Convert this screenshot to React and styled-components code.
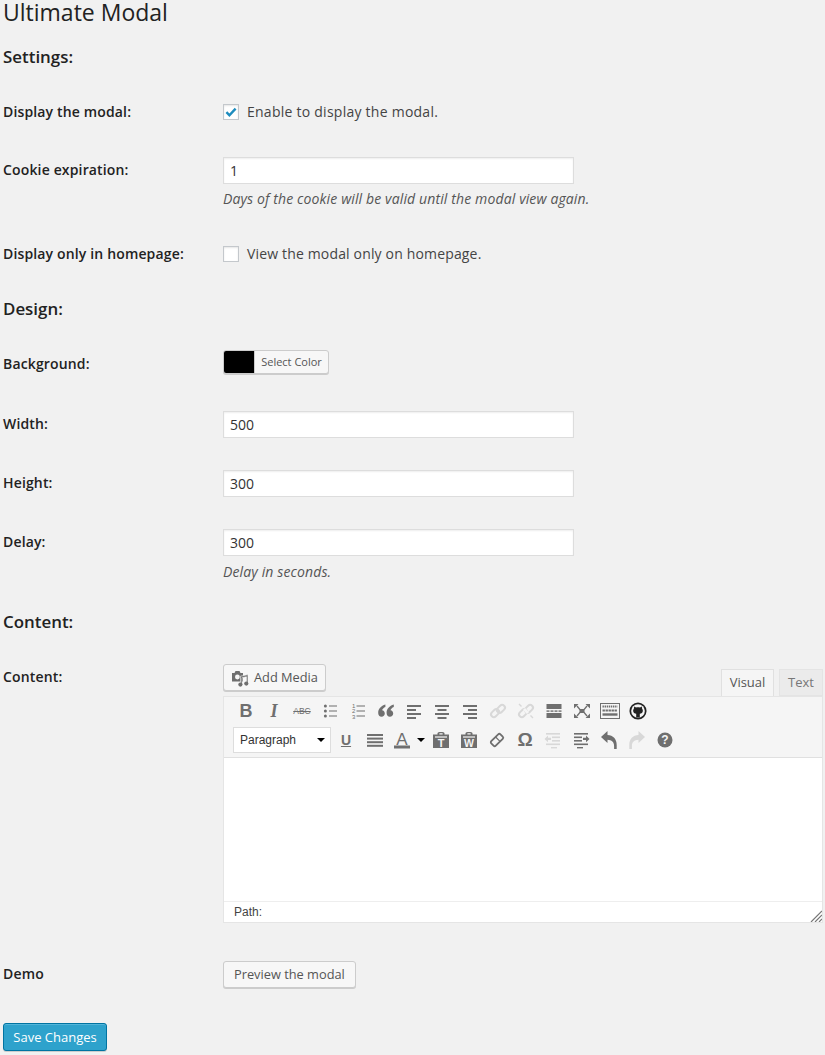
import React from "react";
import styled, { createGlobalStyle } from "styled-components";

const GlobalStyle = createGlobalStyle`
  html, body {
    margin: 0;
    padding: 0;
    background: #f1f1f1;
    color: #444;
    font-family: "Open Sans", sans-serif;
    font-size: 14px;
  }
`;

const Page = styled.form`
  padding-left: 3px;
  height: 1055px;
  box-sizing: border-box;
`;

const Title = styled.h1`
  margin: 0;
  font-size: 23px;
  font-weight: 400;
  line-height: 24px;
  color: #222;
`;

const SectionTitle = styled.h3`
  margin: ${(p) => p.$top}px 0 0;
  font-size: 16.9px;
  font-weight: 600;
  line-height: 22px;
  color: #222;
`;

const Row = styled.div`
  display: grid;
  grid-template-columns: 220px 600px;
  margin-top: ${(p) => p.$top}px;
`;

const Label = styled.label`
  font-weight: 600;
  line-height: 24px;
  letter-spacing: 0.15px;
  color: #222;
  padding-top: ${(p) => p.$offset || 0}px;
`;

const CheckRow = styled.label`
  display: flex;
  align-items: center;
  gap: 8px;
  line-height: 24px;
  letter-spacing: ${(p) => p.$spacing}px;
`;

const Box = styled.span`
  width: 16px;
  height: 16px;
  box-sizing: border-box;
  background: #fff;
  border: 1px solid #c4c8cc;
  box-shadow: inset 0 1px 2px rgba(0, 0, 0, 0.1);
  display: flex;
  align-items: center;
  justify-content: center;
`;

const TextInput = styled.input`
  display: block;
  width: 351px;
  height: 27px;
  box-sizing: border-box;
  margin: 0;
  padding: 3px 5px 3px 6px;
  border: 1px solid #ddd;
  background: #fff;
  color: #333;
  font: 14px "Open Sans", sans-serif;
  box-shadow: inset 0 1px 2px rgba(0, 0, 0, 0.07);
`;

const Hint = styled.p`
  margin: ${(p) => p.$top}px 0 0;
  font-style: italic;
  line-height: 20px;
  letter-spacing: 0.13px;
  color: #555;
`;

const ColorButton = styled.div`
  display: flex;
  width: 106px;
  height: 24px;
  box-sizing: border-box;
  border: 1px solid #ccc;
  border-radius: 3px;
  overflow: hidden;
  background: #f7f7f7;
  box-shadow: 0 1px 0 #ccc;
`;

const Swatch = styled.span`
  width: 30px;
  background: #000;
  border-right: 1px solid #ccc;
`;

const ColorText = styled.span`
  flex: 1;
  font-size: 11px;
  line-height: 22px;
  text-align: center;
  color: #555;
`;

const Button = styled.button`
  display: inline-flex;
  align-items: center;
  gap: 5px;
  height: 27px;
  box-sizing: border-box;
  margin: 0;
  padding: 0 10px;
  border: 1px solid #ccc;
  border-radius: 3px;
  background: #f7f7f7;
  box-shadow: 0 1px 0 #ccc;
  color: #555;
  font: 12.8px/25px "Open Sans", sans-serif;
`;

const MediaButton = styled(Button)`
  padding: 0 7px 0 7px;
`;

const SaveButton = styled(Button)`
  display: block;
  margin-top: 35px;
  height: 28px;
  width: 104px;
  padding: 0;
  text-align: center;
  font-size: 13px;
  background: #2ea2cc;
  border-color: #0074a2;
  box-shadow: inset 0 1px 0 rgba(120, 200, 230, 0.5), 0 1px 0 rgba(0, 0, 0, 0.15);
  color: #fff;
`;

const EditorTop = styled.div`
  display: flex;
  justify-content: space-between;
  align-items: flex-start;
  height: 32px;
`;

const Tabs = styled.div`
  display: flex;
  gap: 5px;
  margin-top: 5px;
  position: relative;
`;

const Tab = styled.span`
  box-sizing: border-box;
  width: ${(p) => p.$w}px;
  height: ${(p) => (p.$active ? 28 : 27)}px;
  border: 1px solid ${(p) => (p.$active ? "#e0e0e0" : "#e4e4e4")};
  border-bottom-color: ${(p) => (p.$active ? "#f5f5f5" : "#e4e4e4")};
  background: ${(p) => (p.$active ? "#f5f5f5" : "#ebebeb")};
  color: ${(p) => (p.$active ? "#555" : "#777")};
  font-size: 13px;
  line-height: 24px;
  text-align: center;
`;

const Editor = styled.div`
  width: 600px;
  box-sizing: border-box;
  border: 1px solid #e5e5e5;
  background: #f5f5f5;
  position: relative;
`;

const ToolRow = styled.div`
  display: flex;
  align-items: center;
  height: 28px;
  padding-left: ${(p) => p.$left}px;
  & + & {
    margin-top: 1px;
  }
`;

const Tool = styled.span`
  width: ${(p) => p.$w || 28}px;
  height: 28px;
  flex: none;
  display: flex;
  align-items: center;
  justify-content: center;
  color: ${(p) => (p.$off ? "#d8d8d8" : "#6f6f6f")};
`;

const Glyph = styled(Tool)`
  font-family: ${(p) => (p.$serif ? '"Liberation Serif", serif' : '"Liberation Sans", sans-serif')};
  font-weight: ${(p) => (p.$light ? 400 : 700)};
  font-style: ${(p) => (p.$italic ? "italic" : "normal")};
  font-size: ${(p) => p.$size || 17}px;
  text-decoration: ${(p) => p.$line || "none"};
`;

const FormatSelect = styled.div`
  width: 98px;
  height: 26px;
  box-sizing: border-box;
  flex: none;
  display: flex;
  align-items: center;
  justify-content: space-between;
  padding: 0 5px 0 6px;
  margin-right: 1px;
  background: #fff;
  border: 1px solid #ddd;
  color: #333;
  font: 12px "Liberation Sans", sans-serif;
`;

const Caret = styled.i`
  width: 0;
  height: 0;
  border-left: 4px solid transparent;
  border-right: 4px solid transparent;
  border-top: 4px solid #000;
`;

const EditArea = styled.div`
  height: 144px;
  margin-top: 3px;
  background: #fff;
  border-top: 1px solid #e0e0e0;
  box-sizing: border-box;
`;

const StatusBar = styled.div`
  height: 21px;
  box-sizing: border-box;
  padding-left: 10px;
  background: #fff;
  border-top: 1px solid #eee;
  color: #444;
  font: 12px/20px "Liberation Sans", sans-serif;
`;

const Grip = styled.svg`
  position: absolute;
  right: 0;
  bottom: 0;
`;

const Svg = ({ children, size = 20 }) => (
  <svg width={size} height={size} viewBox="0 0 20 20" fill="currentColor">
    {children}
  </svg>
);

const Lines = ({ rows }) => (
  <Svg>
    {rows.map(([x, y, w, h = 2], i) => (
      <rect key={i} x={x} y={y} width={w} height={h} />
    ))}
  </Svg>
);

const chain = (
  <>
    <rect x="2.6" y="9.4" width="9" height="5.6" rx="2.8" transform="rotate(-45 7 12.2)" fill="none" stroke="currentColor" strokeWidth="2" />
    <rect x="8.4" y="5" width="9" height="5.6" rx="2.8" transform="rotate(-45 13 7.8)" fill="none" stroke="currentColor" strokeWidth="2" />
  </>
);

const Clipboard = ({ letter }) => (
  <Svg>
    <path d="M2 4.5h4.5V3.2C6.5 2.4 8 2 10 2s3.5.4 3.5 1.2v1.3H18V18H2zM8.4 4.4h3.2V3.3H8.4z" />
    <rect x="4" y="6.4" width="12" height="1.2" fill="#f5f5f5" />
    <text x="10" y="16.6" textAnchor="middle" fontSize={letter === "W" ? 10.5 : 11} fontWeight="700" fontFamily="Liberation Sans" fill="#f5f5f5">
      {letter}
    </text>
  </Svg>
);

const Arrow = ({ flip, off }) => (
  <Tool $off={off}>
    <svg width="20" height="20" viewBox="0 0 20 20" fill="currentColor" style={{ transform: flip ? "scaleX(-1)" : "none" }}>
      <path d="M2 7 8.5 1v4c5.6.2 9.2 4 9.2 10v4h-2.6v-3c0-3.8-2.4-6-6.6-6.2V13z" />
    </svg>
  </Tool>
);

const firstRowTools = (
  <>
    <Glyph $size={18}>B</Glyph>
    <Glyph $size={18} $italic $serif>I</Glyph>
    <Glyph $size={8.5} $light $line="line-through">ABC</Glyph>
    <Tool>
      <Svg>
        <circle cx="5.4" cy="5" r="1.5" />
        <circle cx="5.4" cy="10" r="1.5" />
        <circle cx="5.4" cy="15" r="1.5" />
        <rect x="9" y="4.5" width="8" height="1" />
        <rect x="9" y="9.5" width="8" height="1" />
        <rect x="9" y="14.5" width="8" height="1" />
      </Svg>
    </Tool>
    <Tool>
      <Svg>
        <text x="4" y="7" fontSize="6" fontFamily="Liberation Sans">1</text>
        <text x="4" y="12.3" fontSize="6" fontFamily="Liberation Sans">2</text>
        <text x="4" y="17.5" fontSize="6" fontFamily="Liberation Sans">3</text>
        <rect x="8.5" y="4.5" width="8.5" height="1" />
        <rect x="8.5" y="9.5" width="8.5" height="1" />
        <rect x="8.5" y="14.5" width="8.5" height="1" />
      </Svg>
    </Tool>
    <Tool>
      <Svg>
        <path d="M9.4 3.6C5 4.8 2.2 8 2.2 11.9c0 2.3 1.4 3.9 3.3 3.9s3.3-1.5 3.3-3.3-1.2-3.1-2.7-3.2c.4-1.3 1.6-2.5 3.3-3.2z" />
        <path d="M17.8 3.6c-4.4 1.2-7.2 4.4-7.2 8.3 0 2.3 1.4 3.9 3.3 3.9s3.3-1.5 3.3-3.3-1.2-3.1-2.7-3.2c.4-1.3 1.6-2.5 3.3-3.2z" />
      </Svg>
    </Tool>
    <Tool><Lines rows={[[3, 4, 14], [3, 8, 9], [3, 12, 14], [3, 16, 9]]} /></Tool>
    <Tool><Lines rows={[[3, 4, 14], [5.5, 8, 9], [3, 12, 14], [5.5, 16, 9]]} /></Tool>
    <Tool><Lines rows={[[3, 4, 14], [8, 8, 9], [3, 12, 14], [8, 16, 9]]} /></Tool>
    <Tool $off><Svg>{chain}</Svg></Tool>
    <Tool $off>
      <Svg>
        {chain}
        <path d="M8 8l4 4" stroke="#f5f5f5" strokeWidth="3" />
        <path d="M3 3l2.5 2.5M17 17l-2.5-2.5" stroke="currentColor" strokeWidth="1.4" />
      </Svg>
    </Tool>
    <Tool><Lines rows={[[2.5, 3, 15, 5], [2.5, 9.4, 3, 1.4], [6.5, 9.4, 3, 1.4], [10.5, 9.4, 3, 1.4], [14.5, 9.4, 3, 1.4], [2.5, 12, 15, 5]]} /></Tool>
    <Tool>
      <Svg>
        <path d="M5 5 8 8.6h4L15 5M5 15l3-3.6h4l3 3.6" fill="none" stroke="currentColor" strokeWidth="1.4" />
        <rect x="7.5" y="8.4" width="5" height="3.2" />
        <path d="M2 3h4.5L2 7.5zM18 3h-4.5L18 7.5zM2 17h4.5L2 12.5zM18 17h-4.5l4.5-4.5z" />
      </Svg>
    </Tool>
    <Tool>
      <Svg>
        <rect x="0.5" y="2.5" width="19" height="15" fill="none" stroke="currentColor" />
        <path d="M2.5 5.5h15" stroke="currentColor" strokeWidth="2" strokeDasharray="1.4 .7" />
        <path d="M2.5 9.5h15" stroke="currentColor" strokeWidth="2" strokeDasharray="2.4 .6" />
        <path d="M2.5 13.5h15" stroke="currentColor" strokeWidth="2.4" />
      </Svg>
    </Tool>
    <Tool>
      <svg width="18" height="18" viewBox="0 0 20 20">
        <circle cx="10" cy="10" r="9.5" fill="#222" />
        <circle cx="10" cy="10" r="7.6" fill="#f5f5f5" />
        <path d="M5.8 5 7.8 6.2c1.4-.4 3-.4 4.4 0L14.2 5l.4 2.4c.6.8.8 1.4.8 2.2 0 2.2-1.6 3.2-3.4 3.4v4.2H8v-4.2c-1.8-.2-3.4-1.2-3.4-3.4 0-.8.2-1.4.8-2.2z" fill="#222" />
      </svg>
    </Tool>
  </>
);

const secondRowTools = (
  <>
    <FormatSelect>Paragraph<Caret /></FormatSelect>
    <Glyph $size={14} $line="underline">U</Glyph>
    <Tool $w={29}><Lines rows={[[2, 4, 16, 2], [2, 7.6, 16, 2], [2, 11.2, 16, 2], [2, 14.8, 16, 2]]} /></Tool>
    <Tool $w={26}>
      <Svg>
        <text x="10" y="14.6" textAnchor="middle" fontSize="17" fontFamily="Liberation Sans">A</text>
        <rect x="2" y="15.5" width="16" height="3" />
      </Svg>
    </Tool>
    <Tool $w={12}><Caret /></Tool>
    <Tool><Clipboard letter="T" /></Tool>
    <Tool><Clipboard letter="W" /></Tool>
    <Tool>
      <Svg>
        <rect x="3.5" y="6.8" width="13" height="6.4" rx="1.6" transform="rotate(-45 10 10)" fill="none" stroke="currentColor" strokeWidth="1.8" />
        <path d="M8.6 7 13 11.4" stroke="currentColor" strokeWidth="1.2" />
      </Svg>
    </Tool>
    <Glyph $size={19}>Ω</Glyph>
    <Tool $off>
      <Svg>
        <rect x="3" y="3" width="14" height="1.6" />
        <rect x="9" y="6.5" width="8" height="1.6" />
        <rect x="9" y="10" width="8" height="1.6" />
        <rect x="3" y="13.5" width="14" height="1.6" />
        <rect x="8" y="17" width="6" height="1.4" />
        <path d="M8 7.8H5V5.5L1.5 8.9 5 12.3V10h3z" />
      </Svg>
    </Tool>
    <Tool>
      <Svg>
        <rect x="3" y="3" width="14" height="1.6" />
        <rect x="3" y="6.5" width="8" height="1.6" />
        <rect x="3" y="10" width="8" height="1.6" />
        <rect x="3" y="13.5" width="14" height="1.6" />
        <rect x="6" y="17" width="6" height="1.4" />
        <path d="M12 7.8h3V5.5l3.5 3.4-3.5 3.4V10h-3z" />
      </Svg>
    </Tool>
    <Arrow />
    <Arrow flip off />
    <Tool>
      <Svg>
        <circle cx="10" cy="10" r="7.5" />
        <text x="10" y="14.2" textAnchor="middle" fontSize="12" fontWeight="700" fontFamily="Liberation Sans" fill="#f5f5f5">?</text>
      </Svg>
    </Tool>
  </>
);

export default function App() {
  return (
    <>
      <GlobalStyle />
      <Page>
        <Title>Ultimate Modal</Title>
        <SectionTitle $top={22}>Settings:</SectionTitle>

        <Row $top={32}>
          <Label>Display the modal:</Label>
          <CheckRow $spacing={0.25}>
            <Box>
              <svg width="14" height="14" viewBox="0 0 14 14">
                <path d="M2.4 7.2 5.4 10.2 11.6 3.6" fill="none" stroke="#1e8cbe" strokeWidth="2.4" />
              </svg>
            </Box>
            Enable to display the modal.
          </CheckRow>
        </Row>

        <Row $top={33}>
          <Label $offset={1}>Cookie expiration:</Label>
          <div>
            <TextInput defaultValue="1" />
            <Hint $top={5}>Days of the cookie will be valid until the modal view again.</Hint>
          </div>
        </Row>

        <Row $top={33}>
          <Label>Display only in homepage:</Label>
          <CheckRow $spacing={0.16}>
            <Box />
            View the modal only on homepage.
          </CheckRow>
        </Row>

        <SectionTitle $top={32}>Design:</SectionTitle>

        <Row $top={30}>
          <Label $offset={2}>Background:</Label>
          <ColorButton>
            <Swatch />
            <ColorText>Select Color</ColorText>
          </ColorButton>
        </Row>

        <Row $top={35}>
          <Label $offset={1}>Width:</Label>
          <TextInput defaultValue="500" />
        </Row>

        <Row $top={32}>
          <Label $offset={1}>Height:</Label>
          <TextInput defaultValue="300" />
        </Row>

        <Row $top={32}>
          <Label $offset={1}>Delay:</Label>
          <div>
            <TextInput defaultValue="300" />
            <Hint $top={6}>Delay in seconds.</Hint>
          </div>
        </Row>

        <SectionTitle $top={29}>Content:</SectionTitle>

        <Row $top={31}>
          <Label $offset={1}>Content:</Label>
          <div>
            <EditorTop>
              <MediaButton type="button">
                <svg width="18" height="18" viewBox="0 0 18 18" fill="#6f6f6f">
                  <path d="M1 4h2.5l1-2h4l1 2H12v8.5H1z" />
                  <circle cx="6.4" cy="8" r="2.4" fill="#f7f7f7" />
                  <path d="M9.5 7.2 17 5.6v9h-1.6V7.8l-4.3.9V16H9.5z" stroke="#f7f7f7" strokeWidth="0.6" />
                  <circle cx="9.4" cy="15.6" r="2.1" />
                  <circle cx="15.3" cy="14.6" r="2.1" />
                </svg>
                Add Media
              </MediaButton>
              <Tabs>
                <Tab $active $w={53}>Visual</Tab>
                <Tab $w={44}>Text</Tab>
              </Tabs>
            </EditorTop>
            <Editor>
              <ToolRow $left={8}>{firstRowTools}</ToolRow>
              <ToolRow $left={9}>{secondRowTools}</ToolRow>
              <EditArea />
              <StatusBar>Path:</StatusBar>
              <Grip width="12" height="12" viewBox="0 0 12 12">
                <path d="M1 12 12 1M5 12l7-7M9 12l3-3" stroke="#777" strokeWidth="1.2" />
              </Grip>
            </Editor>
          </div>
        </Row>

        <Row $top={38}>
          <Label $offset={1}>Demo</Label>
          <div>
            <Button type="button">Preview the modal</Button>
          </div>
        </Row>

        <SaveButton type="button">Save Changes</SaveButton>
      </Page>
    </>
  );
}
